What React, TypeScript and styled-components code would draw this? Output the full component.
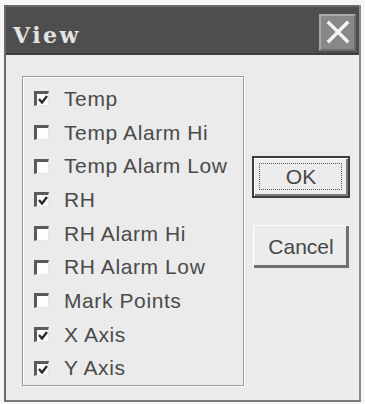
import React from "react";
import styled, { createGlobalStyle } from "styled-components";

const Global = createGlobalStyle`
  html, body { margin: 0; padding: 0; background: #f6f6f6; }
  body { font-family: "Liberation Sans", Arial, sans-serif; }
`;

const Window = styled.div`
  margin: 5px 0 0 4px;
  width: 357px;
  height: 397px;
  box-sizing: border-box;
  display: flex;
  flex-direction: column;
  background: #ebebeb;
  border-left: 2px solid #6a6a6a;
  border-right: 2px solid #8a8a8a;
  border-bottom: 2px solid #7a7a7a;
`;

const TitleBar = styled.div`
  height: 50px;
  flex: none;
  box-sizing: border-box;
  display: flex;
  align-items: center;
  justify-content: space-between;
  padding: 0 3px 0 7px;
  background: #4e4e4e;
  border-top: 2px solid #6a6a6a;
  border-bottom: 2px solid #3e3e3e;
`;

const Title = styled.span`
  font-family: "DejaVu Serif", "Liberation Serif", serif;
  font-weight: bold;
  font-size: 22px;
  letter-spacing: 2.5px;
  color: #e4e4e4;
  margin-top: 10px;
`;

const CloseButton = styled.div`
  width: 37px;
  height: 37px;
  box-sizing: border-box;
  margin-top: 4px;
  display: flex;
  align-items: center;
  justify-content: center;
  background: #888888;
  border: 2px solid #a8a8a8;
  border-right-color: #6c6c6c;
  border-bottom-color: #6c6c6c;
`;

const Body = styled.div`
  flex: 1;
  display: flex;
  align-items: flex-start;
  padding: 21px 9px 0 16px;
  gap: 8px;
`;

const GroupBox = styled.div`
  width: 222px;
  height: 310px;
  box-sizing: border-box;
  border: 1px solid #9a9a9a;
  box-shadow: inset 1px 1px 0 #ffffff, 1px 1px 0 #ffffff;
  padding: 5px 0 0 11px;
  display: flex;
  flex-direction: column;
`;

const Row = styled.div`
  height: 33.7px;
  display: flex;
  align-items: center;
  gap: 15px;
`;

const Box = styled.span`
  width: 15px;
  height: 15px;
  flex: none;
  box-sizing: border-box;
  background: #fdfdfd;
  border-top: 3px solid #5a5a5a;
  border-left: 3px solid #5a5a5a;
  border-right: 1px solid #e6e6e6;
  border-bottom: 1px solid #e6e6e6;
  display: flex;
  align-items: center;
  justify-content: center;
`;

const Label = styled.span`
  font-size: 21px;
  color: #4a4a4a;
  white-space: nowrap;
  letter-spacing: 0.6px;
`;

const Buttons = styled.div`
  display: flex;
  flex-direction: column;
  gap: 26px;
  margin-top: 80px;
`;

const Button = styled.div<{ $default?: boolean }>`
  width: 98px;
  height: ${(p) => (p.$default ? "42px" : "45px")};
  box-sizing: border-box;
  display: flex;
  align-items: center;
  justify-content: center;
  background: #ececec;
  font-size: 21px;
  color: #474747;
  border: ${(p) => (p.$default ? "2px solid #3c3c3c" : "1px solid transparent")};
  box-shadow: ${(p) =>
    p.$default
      ? "inset 1px 1px 0 #ffffff, inset -2px -2px 0 #7a7a7a"
      : "inset 1px 1px 0 #ffffff, inset -3px -3px 0 #707070"};
  position: relative;
`;

const Focus = styled.span`
  position: absolute;
  left: 5px;
  right: 6px;
  top: 5px;
  bottom: 6px;
  border: 1px dotted #555;
`;

const items: [string, boolean][] = [
  ["Temp", true],
  ["Temp Alarm Hi", false],
  ["Temp Alarm Low", false],
  ["RH", true],
  ["RH Alarm Hi", false],
  ["RH Alarm Low", false],
  ["Mark Points", false],
  ["X Axis", true],
  ["Y Axis", true],
];

const Check = () => (
  <svg width="10" height="9" viewBox="0 0 10 9">
    <path d="M1 4 L4 7.5 L9 1" fill="none" stroke="#2a2a2a" strokeWidth="2.4" />
  </svg>
);

export default function App() {
  return (
    <>
      <Global />
      <Window>
        <TitleBar>
          <Title>View</Title>
          <CloseButton>
            <svg width="24" height="24" viewBox="0 0 24 24">
              <path d="M3 3 L21 21 M21 3 L3 21" stroke="#f4f4f4" strokeWidth="3.4" strokeLinecap="square" />
            </svg>
          </CloseButton>
        </TitleBar>
        <Body>
          <GroupBox>
            {items.map(([label, checked]) => (
              <Row key={label}>
                <Box>{checked && <Check />}</Box>
                <Label>{label}</Label>
              </Row>
            ))}
          </GroupBox>
          <Buttons>
            <Button $default>
              <Focus />
              OK
            </Button>
            <Button>Cancel</Button>
          </Buttons>
        </Body>
      </Window>
    </>
  );
}
